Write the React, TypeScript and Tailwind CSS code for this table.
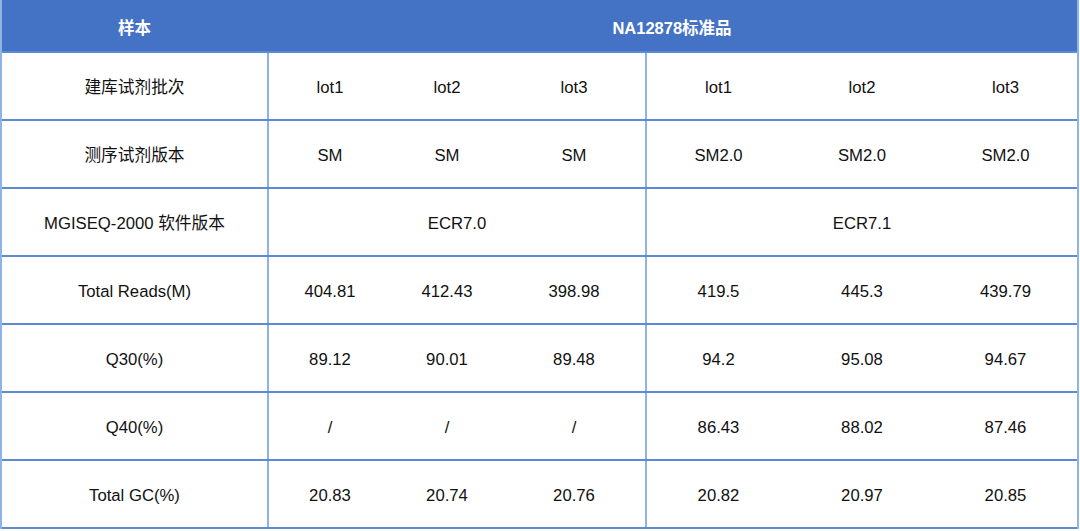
const rows: { label: string; cells: string[]; merged?: boolean }[] = [
  { label: '建库试剂批次', cells: ['lot1', 'lot2', 'lot3', 'lot1', 'lot2', 'lot3'] },
  { label: '测序试剂版本', cells: ['SM', 'SM', 'SM', 'SM2.0', 'SM2.0', 'SM2.0'] },
  { label: 'MGISEQ-2000 软件版本', cells: ['ECR7.0', 'ECR7.1'], merged: true },
  { label: 'Total Reads(M)', cells: ['404.81', '412.43', '398.98', '419.5', '445.3', '439.79'] },
  { label: 'Q30(%)', cells: ['89.12', '90.01', '89.48', '94.2', '95.08', '94.67'] },
  { label: 'Q40(%)', cells: ['/', '/', '/', '86.43', '88.02', '87.46'] },
  { label: 'Total GC(%)', cells: ['20.83', '20.74', '20.76', '20.82', '20.97', '20.85'] },
];

const leftWidths = ['w-[122px]', 'w-[112px]', 'w-[142px]'];
const rightWidths = ['w-[143px]', 'w-[144px]', 'w-[143px]'];

function Cell({ text, width }: { text: string; width: string }) {
  return <div className={`${width} flex items-center justify-center pt-[3px]`}>{text}</div>;
}

export default function App() {
  return (
    <div
      className="w-[1080px] h-[531px] bg-white text-[16.7px] text-[#111]"
      style={{ fontFamily: '"Liberation Sans", Arial, "Noto Sans CJK SC", sans-serif' }}
    >
      <div className="w-[1079px] border-l-2 border-r-2 border-[#8db4e4]">
        {/* Header */}
        <div className="flex h-[53px] bg-[#4472c4] border-b-2 border-[#5b8ad6] font-bold text-white text-[16.5px]">
          <div className="w-[265px] flex items-center justify-center pt-[6px]">样本</div>
          <div className="flex-1 flex items-center justify-center pt-[6px]">NA12878标准品</div>
        </div>

        {rows.map((row) => (
          <div key={row.label} className="flex h-[68px] border-b-2 border-[#5b8ad6]">
            <div className="w-[267px] border-r-2 border-[#8db4e4] flex items-center justify-center pt-[3px]">
              {row.label}
            </div>
            {row.merged ? (
              <>
                <div className="w-[378px] border-r-2 border-[#8db4e4] flex items-center justify-center pt-[3px]">
                  {row.cells[0]}
                </div>
                <div className="flex-1 flex items-center justify-center pt-[3px]">{row.cells[1]}</div>
              </>
            ) : (
              <>
                <div className="w-[378px] border-r-2 border-[#8db4e4] flex">
                  {row.cells.slice(0, 3).map((c, i) => (
                    <Cell key={i} text={c} width={leftWidths[i]} />
                  ))}
                </div>
                <div className="flex-1 flex">
                  {row.cells.slice(3).map((c, i) => (
                    <Cell key={i} text={c} width={rightWidths[i]} />
                  ))}
                </div>
              </>
            )}
          </div>
        ))}
      </div>
    </div>
  );
}
